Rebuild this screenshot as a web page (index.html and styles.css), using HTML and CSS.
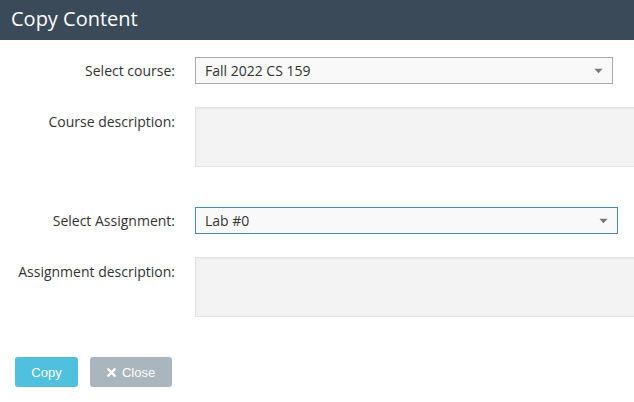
FILE: index.html
```html
<!DOCTYPE html>
<html lang="en">
<head>
    <meta charset="UTF-8">
    <title>Copy Content</title>
    <link rel="stylesheet" href="styles.css">
</head>
<body>
    <div class="dialog">
        <div class="dialog-header">Copy Content</div>

        <div class="dialog-body">
            <div class="form-group">
                <div class="form-row">
                    <label class="form-label label-middle">Select course:</label>
                    <div class="select select-course">
                        <span>Fall 2022 CS 159</span>
                        <svg class="select-arrow" viewBox="0 0 10 6">
                            <path d="M0.5 0.5h9l-4.5 5z"/>
                        </svg>
                    </div>
                </div>
                <div class="form-row">
                    <label class="form-label">Course description:</label>
                    <div class="description"></div>
                </div>
            </div>

            <div class="form-group">
                <div class="form-row">
                    <label class="form-label label-middle">Select Assignment:</label>
                    <div class="select select-assignment focused">
                        <span>Lab #0</span>
                        <svg class="select-arrow" viewBox="0 0 10 6">
                            <path d="M0.5 0.5h9l-4.5 5z"/>
                        </svg>
                    </div>
                </div>
                <div class="form-row">
                    <label class="form-label">Assignment description:</label>
                    <div class="description"></div>
                </div>
            </div>
        </div>

        <div class="dialog-footer">
            <button class="btn btn-copy">Copy</button>
            <button class="btn btn-close">
                <svg viewBox="0 0 10 10">
                    <path d="M1.5 1.5l7 7M8.5 1.5l-7 7"/>
                </svg>
                Close
            </button>
        </div>
    </div>
</body>
</html>
```

FILE: styles.css
```css
* {
    box-sizing: border-box;
}

body {
    margin: 0;
    background-color: #fff;
    font-family: 'Open Sans', sans-serif;
    color: #333;
    overflow: hidden;
}

.dialog {
    width: 660px;
}

.dialog-header {
    height: 40px;
    padding: 6px 11px;
    background-color: #3a4a58;
    color: #fff;
    font-size: 20px;
    line-height: 26px;
}

.dialog-body {
    padding-top: 17px;
}

.form-group {
    margin-bottom: 40px;
}

.form-row {
    display: grid;
    grid-template-columns: 175px 1fr;
    column-gap: 20px;
    margin-bottom: 23px;
}

.form-row:last-child {
    margin-bottom: 0;
}

.form-label {
    text-align: right;
    font-size: 14px;
    line-height: 19px;
    padding-top: 5px;
}

.label-middle {
    align-self: center;
    padding-top: 0;
}

.select {
    display: flex;
    align-items: center;
    justify-content: space-between;
    height: 27px;
    padding: 0 9px 0 9px;
    background-color: #f9f9f9;
    border: 1px solid #aaa;
    font-size: 14px;
}

.select-course {
    width: 418px;
}

.select-assignment {
    width: 423px;
}

.select.focused {
    border-color: #3d8cc7;
}

.select-arrow {
    width: 9px;
    height: 6px;
    fill: #777;
}

.description {
    height: 60px;
    background-color: #f3f3f3;
    border: 1px solid #e3e3e3;
    box-shadow: inset 0 1px 2px rgba(0,0,0,0.04);
}

.dialog-footer {
    display: flex;
    gap: 12px;
    padding-left: 15px;
}

.btn {
    display: flex;
    align-items: center;
    justify-content: center;
    height: 30px;
    border: none;
    border-radius: 3px;
    color: #fff;
    font-family: 'Liberation Sans', Arial, sans-serif;
    font-size: 13px;
    cursor: pointer;
}

.btn-copy {
    width: 63px;
    background-color: #4fc0de;
}

.btn-close {
    width: 82px;
    background-color: #a9b6be;
}

.btn-close svg {
    width: 9px;
    height: 9px;
    margin-right: 6px;
    stroke: #fff;
    stroke-width: 2.6;
    stroke-linecap: round;
    fill: none;
}
```
